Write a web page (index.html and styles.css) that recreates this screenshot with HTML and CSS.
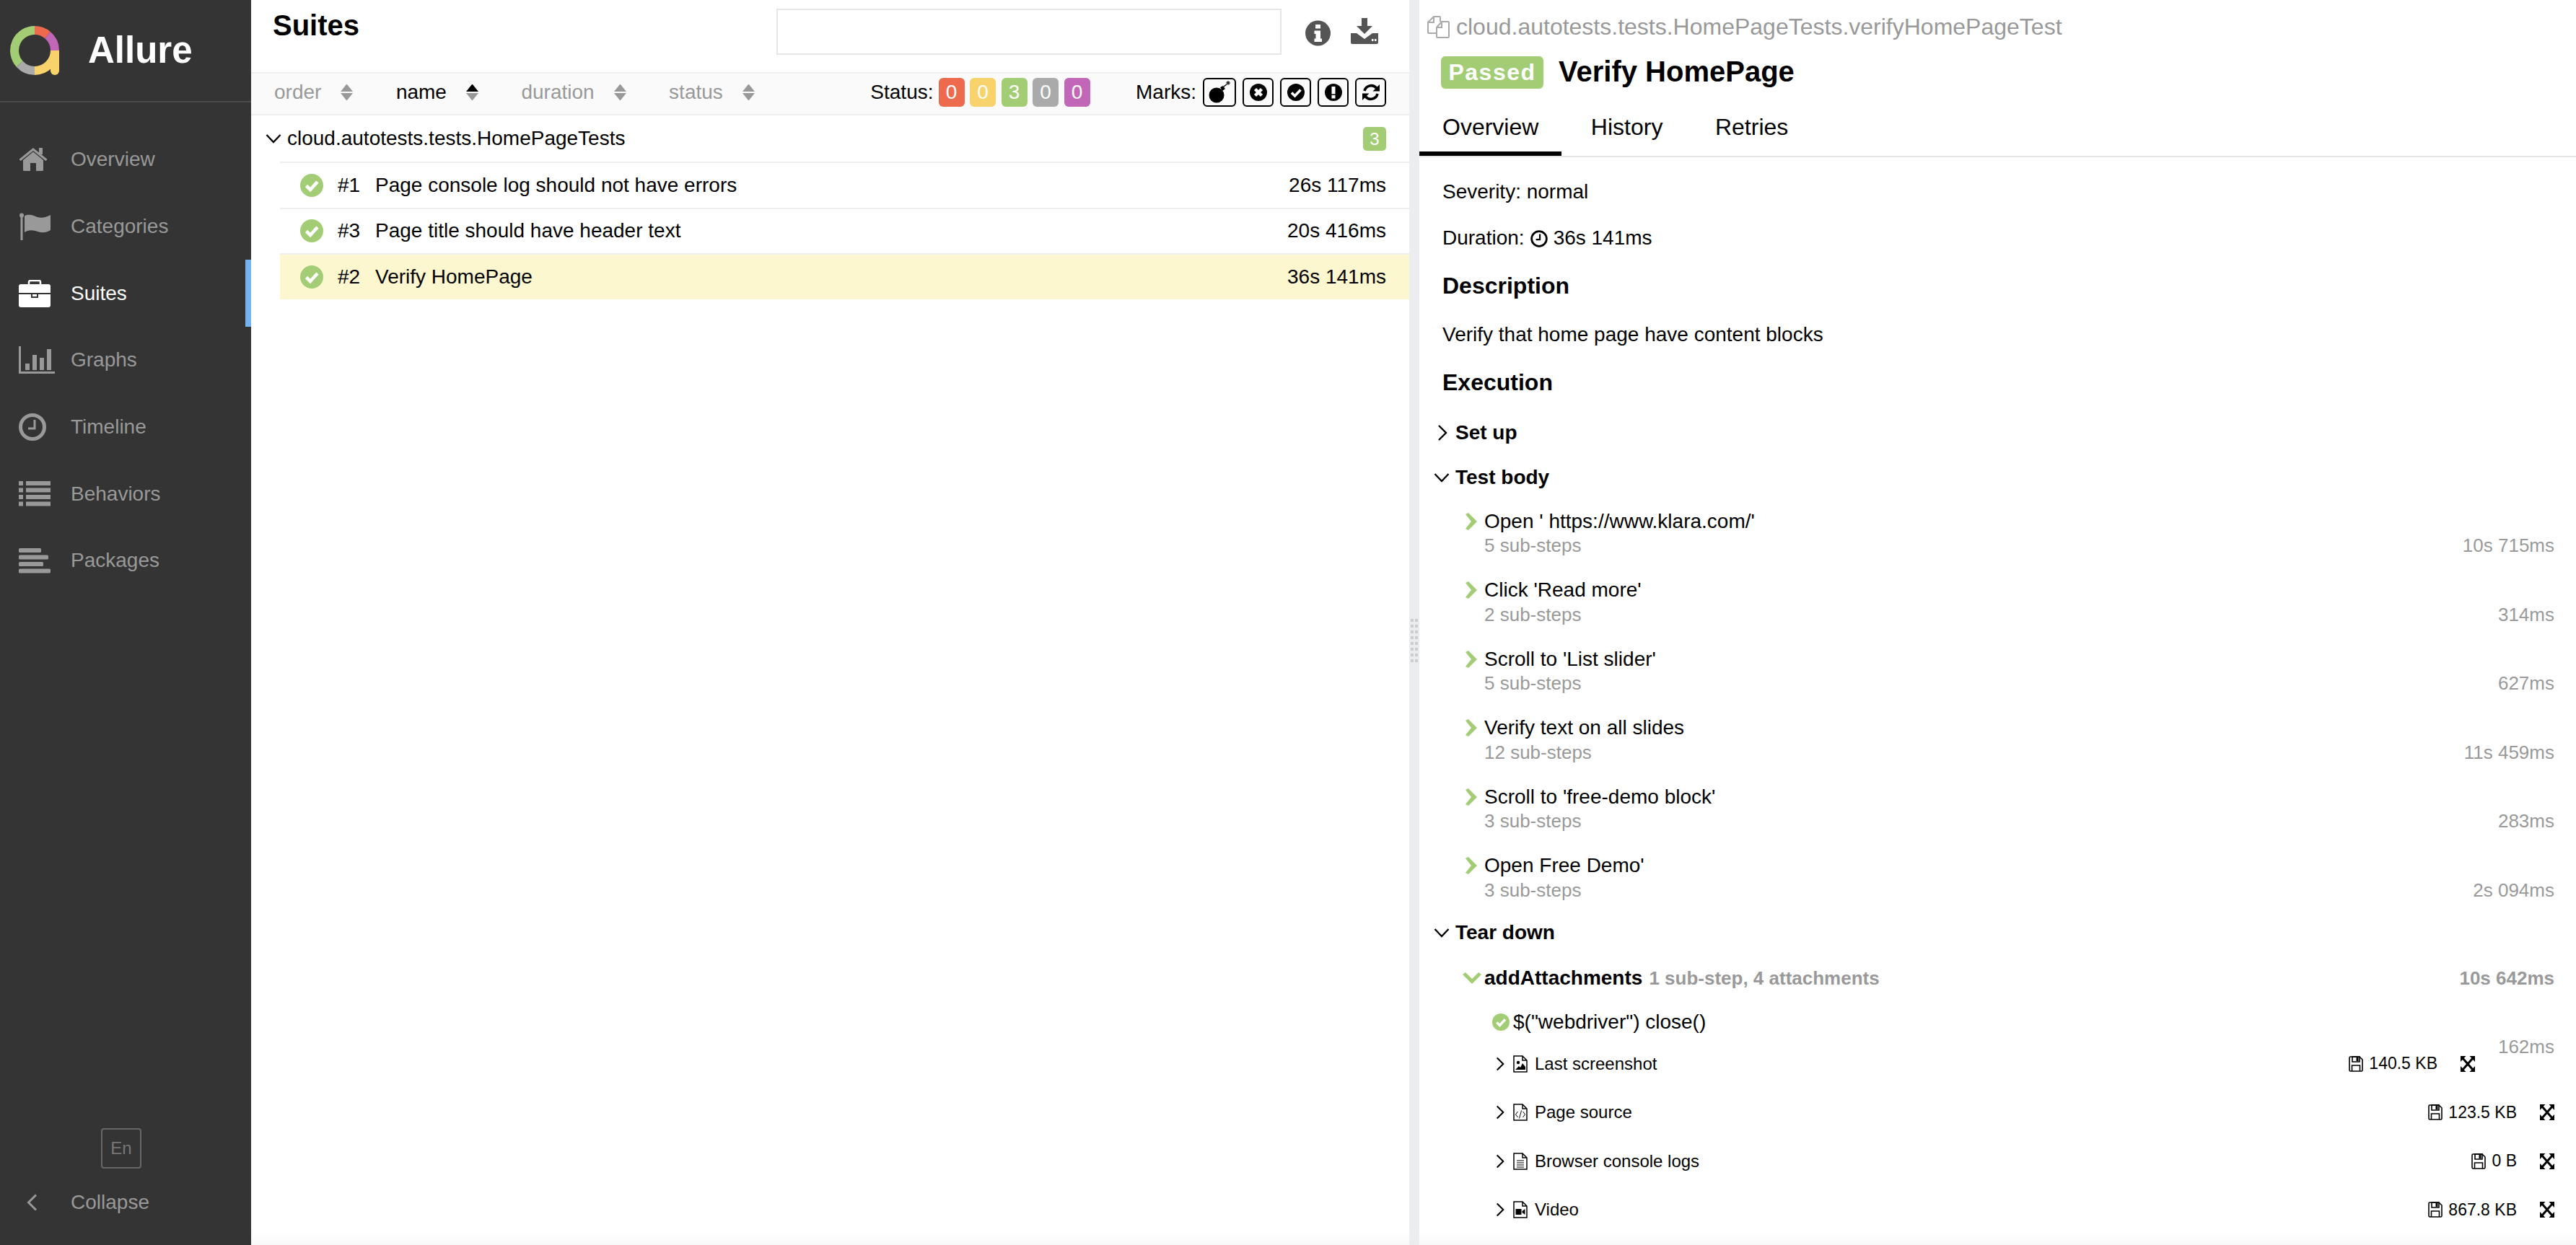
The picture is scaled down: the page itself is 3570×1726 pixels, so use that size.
FILE: index.html
```html
<!DOCTYPE html>
<html lang="en">
<head>
    <meta charset="UTF-8">
    <title>Allure Report</title>
    <link rel="stylesheet" href="styles.css">
</head>
<body>
    <svg class="defs" width="0" height="0">
        <symbol id="check-circle" viewBox="0 0 32 32">
            <circle cx="16" cy="16" r="16" fill="#a3cd75"/>
            <polyline points="8.5,16.5 14,22 24,11" fill="none" stroke="#fff" stroke-width="4.6"/>
        </symbol>
        <symbol id="chev-right" viewBox="0 0 14 24">
            <polyline points="2,2 12,12 2,22" fill="none" stroke="#000" stroke-width="2.4"/>
        </symbol>
        <symbol id="chev-down" viewBox="0 0 22 14">
            <polyline points="1.5,2 11,12 20.5,2" fill="none" stroke="#000" stroke-width="2.4"/>
        </symbol>
        <symbol id="chev-green" viewBox="0 0 16 24">
            <polygon points="0,2 4,0 16,12 4,24 0,22 8,12" fill="#a3cd75"/>
        </symbol>
        <symbol id="save" viewBox="0 0 20 22">
            <path d="M1 2.5 a1.5 1.5 0 0 1 1.5 -1.5 H15 L19 5 V19.5 a1.5 1.5 0 0 1 -1.5 1.5 H2.500 a1.5 1.500 0 0 1 -1.5 -1.500 Z" fill="none" stroke="#000" stroke-width="1.6"/>
            <path d="M5 1 H15 V8 H5 Z" fill="none" stroke="#000" stroke-width="1.600"/>
            <rect x="10.500" y="2" width="3" height="5" fill="#000"/>
            <path d="M4.500 21 V13 H15.500 V21" fill="none" stroke="#000" stroke-width="1.600"/>
        </symbol>
        <symbol id="expand" viewBox="0 0 20 22">
            <path d="M3 3 L17 19 M17 3 L3 19" stroke="#000" stroke-width="3"/>
            <polygon points="0,0 7.500,0 0,8" fill="#000"/>
            <polygon points="20,0 12.500,0 20,8" fill="#000"/>
            <polygon points="0,22 7.500,22 0,14" fill="#000"/>
            <polygon points="20,22 12.500,22 20,14" fill="#000"/>
        </symbol>
        <symbol id="file" viewBox="0 0 20 24">
            <path d="M1 1 H13 L19 7 V23 H1 Z M13 1 V7 H19" fill="none" stroke="#000" stroke-width="1.500"/>
        </symbol>
    </svg>

    <aside class="side">
        <div class="brand">
            <svg class="logo" width="68" height="68" viewBox="14 36 68 68">
                <path d="M27.200 88.700 A28 28 0 0 1 48 42" fill="none" stroke="#a3cd75" stroke-width="12"/>
                <path d="M48 42 A28 28 0 0 1 66 48.600" fill="none" stroke="#ee6a4e" stroke-width="12"/>
                <path d="M66 48.600 A28 28 0 0 1 76 70" fill="none" stroke="#c266b8" stroke-width="12"/>
                <path d="M76 70 A28 28 0 0 1 48 98" fill="none" stroke="#f8d36c" stroke-width="12"/>
                <path d="M48 98 A28 28 0 0 1 27.200 88.700" fill="none" stroke="#aaa" stroke-width="12"/>
                <path d="M70 70 H82 V98 a6 6 0 0 1 -12 0 Z" fill="#f8d36c"/>
            </svg>
            <span class="brand-name">Allure</span>
        </div>
        <nav class="nav">
            <a class="nav-item">
                <span class="nav-icon">
                    <svg width="40" height="32" viewBox="0 0 40 32" fill="#999">
                        <path d="M6 17 L20 5.500 L34 17 V30.500 a1.500 1.500 0 0 1 -1.500 1.500 H24 V21 H16 V32 H7.500 a1.500 1.500 0 0 1 -1.500 -1.500 Z"/>
                        <polyline points="1.500,17 20,2 38.500,17" fill="none" stroke="#999" stroke-width="3"/>
                        <rect x="28" y="0" width="5" height="9"/>
                    </svg>
                </span>
                Overview
            </a>
            <a class="nav-item">
                <span class="nav-icon">
                    <svg width="44" height="38" viewBox="0 0 44 38" fill="#999">
                        <circle cx="4" cy="3.500" r="3"/>
                        <rect x="2.500" y="4" width="3" height="34"/>
                        <path d="M8 4 C16 1 20 4 26 6 C32 8 38 6 44 3 V24 C38 28 32 28 26 26 C20 24 14 23 8 27 Z"/>
                    </svg>
                </span>
                Categories
            </a>
            <a class="nav-item active">
                <span class="nav-icon">
                    <svg width="44" height="38" viewBox="0 0 44 38" fill="#fff">
                        <path d="M14 6 V3 a2 2 0 0 1 2 -2 H28 a2 2 0 0 1 2 2 V6" fill="none" stroke="#fff" stroke-width="2.500"/>
                        <path d="M3 6 H41 a3 3 0 0 1 3 3 V18 H0 V9 a3 3 0 0 1 3 -3 Z"/>
                        <path d="M0 20 H17 V25 H27 V20 H44 V35 a3 3 0 0 1 -3 3 H3 a3 3 0 0 1 -3 -3 Z"/>
                        <rect x="19" y="20" width="6" height="3"/>
                    </svg>
                </span>
                Suites
            </a>
            <a class="nav-item">
                <span class="nav-icon">
                    <svg width="50" height="38" viewBox="0 0 50 38" fill="#999">
                        <path d="M0 0 H3 V35 H50 V38 H0 Z"/>
                        <rect x="9" y="24" width="6" height="9"/>
                        <rect x="19" y="12" width="6" height="21"/>
                        <rect x="29" y="16" width="6" height="17"/>
                        <rect x="39" y="4" width="6" height="29"/>
                    </svg>
                </span>
                Graphs
            </a>
            <a class="nav-item">
                <span class="nav-icon">
                    <svg width="38" height="38" viewBox="0 0 38 38">
                        <circle cx="19" cy="19" r="16.500" fill="none" stroke="#999" stroke-width="5"/>
                        <polyline points="22,9 22,21 13,21" fill="none" stroke="#999" stroke-width="3"/>
                    </svg>
                </span>
                Timeline
            </a>
            <a class="nav-item">
                <span class="nav-icon">
                    <svg width="44" height="35" viewBox="0 0 44 35" fill="#999">
                        <rect x="0" y="0" width="6" height="6"/><rect x="10" y="0" width="34" height="6"/>
                        <rect x="0" y="9.500" width="6" height="6"/><rect x="10" y="9.500" width="34" height="6"/>
                        <rect x="0" y="19" width="6" height="6"/><rect x="10" y="19" width="34" height="6"/>
                        <rect x="0" y="28.500" width="6" height="6"/><rect x="10" y="28.500" width="34" height="6"/>
                    </svg>
                </span>
                Behaviors
            </a>
            <a class="nav-item">
                <span class="nav-icon">
                    <svg width="44" height="35" viewBox="0 0 44 35" fill="#999">
                        <rect x="0" y="0" width="31" height="6" rx="1.500"/>
                        <rect x="0" y="9.500" width="41" height="6" rx="1.500"/>
                        <rect x="0" y="19" width="34" height="6" rx="1.500"/>
                        <rect x="0" y="28.500" width="44" height="6" rx="1.500"/>
                    </svg>
                </span>
                Packages
            </a>
        </nav>
        <div class="side-foot">
            <button class="lang">En</button>
            <a class="collapse">
                <span class="nav-icon collapse-icon">
                    <svg width="15" height="24" viewBox="0 0 15 24">
                        <polyline points="13,1.500 2.500,12 13,22.500" fill="none" stroke="#999" stroke-width="3"/>
                    </svg>
                </span>
                Collapse
            </a>
        </div>
    </aside>

    <main class="suites">
        <header class="suites-head">
            <h2 class="suites-title">Suites</h2>
            <input class="search" type="text">
            <svg class="info-icon" width="35" height="36" viewBox="0 0 35 36">
                <circle cx="17.500" cy="18" r="17.500" fill="#555"/>
                <path d="M14 6 H21 V11.500 H14 Z M12.500 14.500 H21 V25.500 H23 V30 H12.500 V25.500 H14.500 V19 H12.500 Z" fill="#fff"/>
            </svg>
            <svg class="dl-icon" width="38" height="36" viewBox="0 0 38 36">
                <path d="M15 0 H23 V11 H30 L19 22 L8 11 H15 Z" fill="#555"/>
                <path d="M0 21 H8 L19 29 L30 21 H38 V34 a2 2 0 0 1 -2 2 H2 a2 2 0 0 1 -2 -2 Z" fill="#555"/>
                <rect x="29" y="29" width="2.500" height="3" fill="#fff"/>
                <rect x="33" y="29" width="2.500" height="3" fill="#fff"/>
            </svg>
        </header>

        <div class="sortbar">
            <span class="sorter">order <i class="sort-arrows"></i></span>
            <span class="sorter current">name <i class="sort-arrows"></i></span>
            <span class="sorter">duration <i class="sort-arrows"></i></span>
            <span class="sorter">status <i class="sort-arrows"></i></span>
            <div class="filters">
                <span class="filter-label">Status:</span>
                <span class="chip failed">0</span>
                <span class="chip broken">0</span>
                <span class="chip passed">3</span>
                <span class="chip skipped">0</span>
                <span class="chip unknown">0</span>
                <span class="filter-label marks-label">Marks:</span>
                <span class="mark mark-wide">
                    <svg width="34" height="32" viewBox="0 0 34 32">
                        <circle cx="13" cy="20" r="10.500" fill="#000"/>
                        <path d="M18 9 L22 7 L25 11 L21 14 Z" fill="#000"/>
                        <path d="M23 8 L27 5" fill="none" stroke="#000" stroke-width="1.500"/>
                        <path d="M29 0 V6 M26 3 H32 M27 1 L31 5 M31 1 L27 5" stroke="#000" stroke-width="1"/>
                    </svg>
                </span>
                <span class="mark">
                    <svg width="28" height="28" viewBox="0 0 28 28">
                        <circle cx="14" cy="14" r="12" fill="#000"/>
                        <path d="M9.500 9.500 L18.500 18.500 M18.500 9.500 L9.500 18.500" stroke="#fff" stroke-width="4.500"/>
                    </svg>
                </span>
                <span class="mark">
                    <svg width="28" height="28" viewBox="0 0 28 28">
                        <circle cx="14" cy="14" r="12" fill="#000"/>
                        <polyline points="8,14.500 12.500,19 20.500,10.500" fill="none" stroke="#fff" stroke-width="3.600"/>
                    </svg>
                </span>
                <span class="mark">
                    <svg width="28" height="28" viewBox="0 0 28 28">
                        <circle cx="14" cy="14" r="12" fill="#000"/>
                        <rect x="11.500" y="6" width="5" height="10.500" fill="#fff"/>
                        <rect x="11.500" y="18" width="5" height="4.500" fill="#fff"/>
                    </svg>
                </span>
                <span class="mark">
                    <svg width="28" height="28" viewBox="0 0 28 28">
                        <path d="M5 12 A9.500 9.500 0 0 1 21.500 8" fill="none" stroke="#000" stroke-width="3.600"/>
                        <path d="M26 3 V12.500 H16.500 Z" fill="#000"/>
                        <path d="M23 16 A9.500 9.500 0 0 1 6.500 20" fill="none" stroke="#000" stroke-width="3.600"/>
                        <path d="M2 25 V15.500 H11.500 Z" fill="#000"/>
                    </svg>
                </span>
            </div>
        </div>

        <div class="group">
            <svg class="group-chev" width="22" height="14"><use href="#chev-down"/></svg>
            <span class="group-name">cloud.autotests.tests.HomePageTests</span>
            <span class="count">3</span>
        </div>
        <div class="case">
            <svg class="case-status" width="32" height="32"><use href="#check-circle"/></svg>
            <span class="case-num">#1</span>
            <span class="case-name">Page console log should not have errors</span>
            <span class="case-time">26s 117ms</span>
        </div>
        <div class="case">
            <svg class="case-status" width="32" height="32"><use href="#check-circle"/></svg>
            <span class="case-num">#3</span>
            <span class="case-name">Page title should have header text</span>
            <span class="case-time">20s 416ms</span>
        </div>
        <div class="case selected">
            <svg class="case-status" width="32" height="32"><use href="#check-circle"/></svg>
            <span class="case-num">#2</span>
            <span class="case-name">Verify HomePage</span>
            <span class="case-time">36s 141ms</span>
        </div>
        <div class="fade"></div>
    </main>

    <div class="splitter">
        <div class="grip"></div>
    </div>

    <section class="detail">
        <div class="path">
            <svg class="copy-icon" width="31" height="31" viewBox="0 0 31 31">
                <path d="M13 24 H2 a1 1 0 0 1 -1 -1 V9 L9 1 H17 a1 1 0 0 1 1 1 V8 M9 1 V9 H1" fill="none" stroke="#aaa" stroke-width="2"/>
                <path d="M13 16 L20 8 H29 a1 1 0 0 1 1 1 V29 a1 1 0 0 1 -1 1 H14 a1 1 0 0 1 -1 -1 Z M20 8 V16 H13" fill="none" stroke="#aaa" stroke-width="2"/>
            </svg>
            <span>cloud.autotests.tests.HomePageTests.verifyHomePageTest</span>
        </div>
        <div class="title-row">
            <span class="passed-badge">Passed</span>
            <h2 class="test-title">Verify HomePage</h2>
        </div>
        <div class="tabs">
            <a class="tab active">Overview</a>
            <a class="tab">History</a>
            <a class="tab">Retries</a>
        </div>

        <div class="body">
            <p class="line severity">Severity: normal</p>
            <p class="line duration">
                Duration:
                <svg class="clock" width="24" height="24" viewBox="0 0 22 22">
                    <circle cx="11" cy="11" r="9.500" fill="none" stroke="#000" stroke-width="2.500"/>
                    <polyline points="12,5 12,12 7,12" fill="none" stroke="#000" stroke-width="2"/>
                </svg>
                36s 141ms
            </p>
            <h3 class="sec-title desc-title">Description</h3>
            <p class="line desc-text">Verify that home page have content blocks</p>
            <h3 class="sec-title exec-title">Execution</h3>

            <div class="stages">
                <div class="stage">
                    <svg class="stage-closed" width="14" height="24"><use href="#chev-right"/></svg>
                    <span>Set up</span>
                </div>
                <div class="stage">
                    <svg width="22" height="14"><use href="#chev-down"/></svg>
                    <span>Test body</span>
                </div>
                <div class="steps">
                    <div class="step">
                        <svg class="step-chev" width="16" height="24"><use href="#chev-green"/></svg>
                        <span class="step-name">Open ' https://www.klara.com/'</span>
                        <span class="step-sub">5 sub-steps</span>
                        <span class="step-time">10s 715ms</span>
                    </div>
                    <div class="step">
                        <svg class="step-chev" width="16" height="24"><use href="#chev-green"/></svg>
                        <span class="step-name">Click 'Read more'</span>
                        <span class="step-sub">2 sub-steps</span>
                        <span class="step-time">314ms</span>
                    </div>
                    <div class="step">
                        <svg class="step-chev" width="16" height="24"><use href="#chev-green"/></svg>
                        <span class="step-name">Scroll to 'List slider'</span>
                        <span class="step-sub">5 sub-steps</span>
                        <span class="step-time">627ms</span>
                    </div>
                    <div class="step">
                        <svg class="step-chev" width="16" height="24"><use href="#chev-green"/></svg>
                        <span class="step-name">Verify text on all slides</span>
                        <span class="step-sub">12 sub-steps</span>
                        <span class="step-time">11s 459ms</span>
                    </div>
                    <div class="step">
                        <svg class="step-chev" width="16" height="24"><use href="#chev-green"/></svg>
                        <span class="step-name">Scroll to 'free-demo block'</span>
                        <span class="step-sub">3 sub-steps</span>
                        <span class="step-time">283ms</span>
                    </div>
                    <div class="step">
                        <svg class="step-chev" width="16" height="24"><use href="#chev-green"/></svg>
                        <span class="step-name">Open Free Demo'</span>
                        <span class="step-sub">3 sub-steps</span>
                        <span class="step-time">2s 094ms</span>
                    </div>
                </div>
                <div class="stage">
                    <svg width="22" height="14"><use href="#chev-down"/></svg>
                    <span>Tear down</span>
                </div>
            </div>

            <div class="open-step">
                <svg class="open-chev" width="26" height="16" viewBox="0 0 26 16">
                    <polygon points="0,3 4,0 13,9 22,0 26,3 13,16" fill="#a3cd75"/>
                </svg>
                <span class="open-name">addAttachments</span>
                <span class="open-info">1 sub-step, 4 attachments</span>
                <span class="open-time">10s 642ms</span>
            </div>
            <div class="sub-step">
                <svg class="sub-check" width="24" height="24"><use href="#check-circle"/></svg>
                <span class="sub-name">$("webdriver") close()</span>
                <span class="sub-time">162ms</span>
            </div>

            <div class="attach first">
                <svg class="att-chev" width="12" height="24"><use href="#chev-right"/></svg>
                <svg class="att-file" width="20" height="24" viewBox="0 0 20 24">
                    <use href="#file"/>
                    <circle cx="7" cy="10" r="2.200" fill="#000"/>
                    <path d="M3 20 L8 15 L10 17 L13 11 L17 16 V20 Z" fill="#000"/>
                </svg>
                <span class="att-name">Last screenshot</span>
                <svg class="att-save" width="20" height="22"><use href="#save"/></svg>
                <span class="att-size">140.5 KB</span>
                <svg class="att-expand" width="20" height="22"><use href="#expand"/></svg>
            </div>
            <div class="attach">
                <svg class="att-chev" width="12" height="24"><use href="#chev-right"/></svg>
                <svg class="att-file" width="20" height="24" viewBox="0 0 20 24">
                    <use href="#file"/>
                    <path d="M6.500 11 L3.500 15 L6.500 19 M13.500 11 L16.500 15 L13.500 19 M11.500 9.500 L8.500 20.500" fill="none" stroke="#000" stroke-width="1"/>
                </svg>
                <span class="att-name">Page source</span>
                <svg class="att-save" width="20" height="22"><use href="#save"/></svg>
                <span class="att-size">123.5 KB</span>
                <svg class="att-expand" width="20" height="22"><use href="#expand"/></svg>
            </div>
            <div class="attach">
                <svg class="att-chev" width="12" height="24"><use href="#chev-right"/></svg>
                <svg class="att-file" width="20" height="24" viewBox="0 0 20 24">
                    <use href="#file"/>
                    <path d="M5 11 H15 M5 14 H15 M5 17 H15 M5 20 H15" stroke="#000" stroke-width="1.200"/>
                </svg>
                <span class="att-name">Browser console logs</span>
                <svg class="att-save" width="20" height="22"><use href="#save"/></svg>
                <span class="att-size">0 B</span>
                <svg class="att-expand" width="20" height="22"><use href="#expand"/></svg>
            </div>
            <div class="attach">
                <svg class="att-chev" width="12" height="24"><use href="#chev-right"/></svg>
                <svg class="att-file" width="20" height="24" viewBox="0 0 20 24">
                    <use href="#file"/>
                    <path d="M3.500 11 H11.500 V19 H3.500 Z M12.500 14 L16.500 11 V19 L12.500 16 Z" fill="#000"/>
                </svg>
                <span class="att-name">Video</span>
                <svg class="att-save" width="20" height="22"><use href="#save"/></svg>
                <span class="att-size">867.8 KB</span>
                <svg class="att-expand" width="20" height="22"><use href="#expand"/></svg>
            </div>
        </div>
        <div class="fade"></div>
    </section>
</body>
</html>
```

FILE: styles.css
```css
* {
    box-sizing: border-box;
}

html, body {
    margin: 0;
    height: 100%;
}

body {
    display: flex;
    height: 1726px;
    overflow: hidden;
    font-family: "Liberation Sans", Arial, sans-serif;
    font-size: 28px;
    color: #000;
    background: #fff;
}

svg {
    display: block;
    flex: none;
}

.defs {
    position: absolute;
}

/* sidebar */
.side {
    width: 348px;
    flex: none;
    display: flex;
    flex-direction: column;
    background: #343434;
    color: #999;
}

.brand {
    height: 142px;
    padding: 36px 0 0 14px;
    display: flex;
    align-items: flex-start;
    border-bottom: 2px solid #494949;
}

.brand-name {
    margin-left: 40px;
    font-size: 51px;
    line-height: 68px;
    font-weight: bold;
    color: #fff;
}

.nav {
    padding-top: 33px;
}

.nav-item {
    height: 92.700px;
    padding-left: 26px;
    display: flex;
    align-items: center;
    border-right: 8px solid transparent;
}

.nav-item.active {
    color: #fff;
    border-right-color: #74b3ef;
}

.nav-icon {
    width: 72px;
    flex: none;
    display: flex;
}

.side-foot {
    margin-top: auto;
    padding-bottom: 31px;
    display: flex;
    flex-direction: column;
}

.lang {
    width: 56px;
    height: 56px;
    margin: 0 0 19px 140px;
    padding: 0;
    font: 24px "Liberation Sans", Arial, sans-serif;
    color: #777;
    background: none;
    border: 2px solid #666;
    border-radius: 4px;
}

.collapse {
    height: 56px;
    padding-left: 37px;
    display: flex;
    align-items: center;
}

.collapse-icon {
    width: 61px;
}

/* suites list */
.suites {
    position: relative;
    flex: 1;
    min-width: 0;
}

.suites-head {
    height: 100px;
    padding: 12px 43px 0 30px;
    display: flex;
    align-items: flex-start;
}

.suites-title {
    margin: 0;
    font-size: 40px;
    line-height: 46px;
    font-weight: bold;
}

.search {
    width: 700px;
    height: 64px;
    margin-left: auto;
    border: 2px solid #e6e6e6;
    background: #fff;
}

.info-icon {
    margin: 16px 0 0 33px;
}

.dl-icon {
    margin: 13px 0 0 28px;
}

.sortbar {
    height: 60px;
    padding: 0 32px 4px;
    display: flex;
    align-items: center;
    background: #fafafa;
    border-top: 2px solid #eee;
    border-bottom: 2px solid #eee;
}

.sorter {
    margin-right: 59.500px;
    display: flex;
    align-items: center;
    gap: 27px;
    color: #999;
}

.sorter.current {
    color: #000;
}

.sort-arrows {
    width: 17px;
    height: 22px;
    display: flex;
    flex-direction: column;
    justify-content: space-between;
}

.sort-arrows::before,
.sort-arrows::after {
    content: "";
    border-left: 8.500px solid transparent;
    border-right: 8.500px solid transparent;
}

.sort-arrows::before {
    border-bottom: 10px solid #999;
}

.sort-arrows::after {
    border-top: 10px solid #999;
}

.current .sort-arrows::before {
    border-bottom-color: #000;
}

.filters {
    margin-left: auto;
    display: flex;
    align-items: center;
}

.filter-label {
    margin-right: 7px;
}

.marks-label {
    margin-left: 56px;
    margin-right: 9px;
}

.chip {
    width: 36px;
    height: 40px;
    margin-right: 7.500px;
    border-radius: 6px;
    color: #fff;
    text-align: center;
    line-height: 40px;
}

.failed {
    background: #ee6a4e;
}

.broken {
    background: #f8d36c;
}

.passed {
    background: #a3cd75;
}

.skipped {
    background: #aaa;
}

.unknown {
    background: #c266b8;
}

.mark {
    width: 43px;
    height: 40px;
    margin-left: 9px;
    display: flex;
    align-items: center;
    justify-content: center;
    border: 2px solid #000;
    border-radius: 6px;
}

.mark-wide {
    width: 46px;
    margin-left: 0;
}

.group {
    height: 64px;
    padding: 0 32px 0 20px;
    display: flex;
    align-items: center;
}

.group-chev {
    margin-right: 8px;
}

.group-name {
    flex: 1;
}

.count {
    width: 32px;
    height: 33px;
    border-radius: 5px;
    background: #a3cd75;
    color: #fff;
    font-size: 24px;
    line-height: 33px;
    text-align: center;
}

.case {
    height: 63.500px;
    margin-left: 40px;
    padding: 0 32px 0 28px;
    display: flex;
    align-items: center;
    border-top: 2px solid #eee;
}

.case.selected {
    background: #fdf7d0;
}

.case-num {
    width: 52px;
    margin-left: 20px;
}

.case-name {
    flex: 1;
}

.fade {
    position: absolute;
    left: 0;
    right: 0;
    bottom: 0;
    height: 18px;
    background: linear-gradient(rgba(248, 248, 248, 0), #f8f8f8);
}

/* drag handle between the panes */
.splitter {
    width: 14px;
    flex: none;
    padding: 858px 2px 0;
    background: #ebedef;
}

.grip {
    height: 60px;
    background-image:
        linear-gradient(transparent 4px, #ebedef 4px),
        linear-gradient(90deg, #cdcdcd 4px, transparent 4px, transparent 6px, #cdcdcd 6px);
    background-size: 10px 8px;
}

/* test detail */
.detail {
    position: relative;
    width: 1603px;
    flex: none;
}

.path {
    height: 74px;
    padding-left: 11px;
    display: flex;
    align-items: center;
    gap: 9px;
    font-size: 32px;
    color: #999;
}

.title-row {
    height: 50px;
    padding: 2px 0 0 30px;
    display: flex;
    align-items: center;
}

.passed-badge {
    width: 142px;
    height: 45px;
    border-radius: 6px;
    background: #a3cd75;
    color: #fff;
    font-size: 32px;
    line-height: 45px;
    font-weight: bold;
    letter-spacing: 1.500px;
    text-align: center;
}

.test-title {
    margin: 0 0 2px 21px;
    font-size: 40px;
    line-height: 50px;
    font-weight: bold;
}

.tabs {
    height: 94px;
    padding-top: 12px;
    display: flex;
    gap: 8.500px;
    border-bottom: 2px solid #e5e5e5;
}

.tab {
    height: 80px;
    padding: 20px 32px 0;
    font-size: 32px;
    line-height: 40px;
    border-bottom: 6px solid transparent;
}

.tab.active {
    border-bottom-color: #000;
}

.body {
    padding: 0 30px 0 32px;
}

.line {
    margin: 0;
    display: flex;
    align-items: center;
    gap: 8px;
    line-height: 34px;
}

.severity {
    margin-top: 31px;
}

.duration {
    margin-top: 30px;
}

.clock {
    margin-top: 1px;
}

.sec-title {
    margin: 0;
    font-size: 32px;
    line-height: 40px;
    font-weight: bold;
}

.desc-title {
    margin-top: 29px;
}

.desc-text {
    margin-top: 31px;
}

.exec-title {
    margin-top: 29px;
}

.stages {
    margin-top: 18.500px;
}

.stage {
    height: 62px;
    margin-left: -12px;
    display: flex;
    align-items: center;
    font-weight: bold;
}

.stage svg {
    margin-right: 8px;
}

.stage .stage-closed {
    margin-left: 5px;
    margin-right: 11px;
}

.steps {
    padding: 13px 0 11px 32px;
    display: flex;
    flex-direction: column;
    gap: 27.600px;
}

.step {
    display: grid;
    grid-template-columns: 26px 1fr auto;
    grid-template-rows: 34px 34px;
    align-items: center;
}

.step-chev {
    grid-column: 1;
    grid-row: 1;
}

.step-name {
    grid-column: 2;
    grid-row: 1;
}

.step-sub {
    grid-column: 2;
    grid-row: 2;
    font-size: 26px;
    color: #999;
}

.step-time {
    grid-column: 3;
    grid-row: 2;
    font-size: 26px;
    color: #999;
}

.open-step {
    height: 34px;
    margin: 15px 0 0 28px;
    display: flex;
    align-items: center;
    font-weight: bold;
}

.open-chev {
    margin-right: 4px;
}

.open-info {
    margin-left: 9px;
    flex: 1;
    font-size: 26px;
    color: #999;
}

.open-time {
    font-size: 26px;
    color: #999;
}

.sub-step {
    height: 68px;
    margin: 27px 0 -27.500px 69px;
    display: grid;
    grid-template-columns: 29px 1fr auto;
    grid-template-rows: 34px 34px;
    align-items: center;
}

.sub-check {
    grid-row: 1;
}

.sub-name {
    grid-row: 1;
    grid-column: 2;
}

.sub-time {
    grid-row: 2;
    grid-column: 3;
    font-size: 26px;
    color: #999;
}

.attach {
    height: 67.500px;
    margin-left: 74px;
    display: flex;
    align-items: center;
    font-size: 24px;
}

.attach.first {
    margin-right: 110px;
}

.att-chev {
    margin-right: 12px;
}

.att-file {
    margin-right: 10px;
}

.att-name {
    flex: 1;
}

.att-size {
    margin-left: 8px;
    font-size: 23px;
}

.att-expand {
    margin-left: 32px;
}
```
